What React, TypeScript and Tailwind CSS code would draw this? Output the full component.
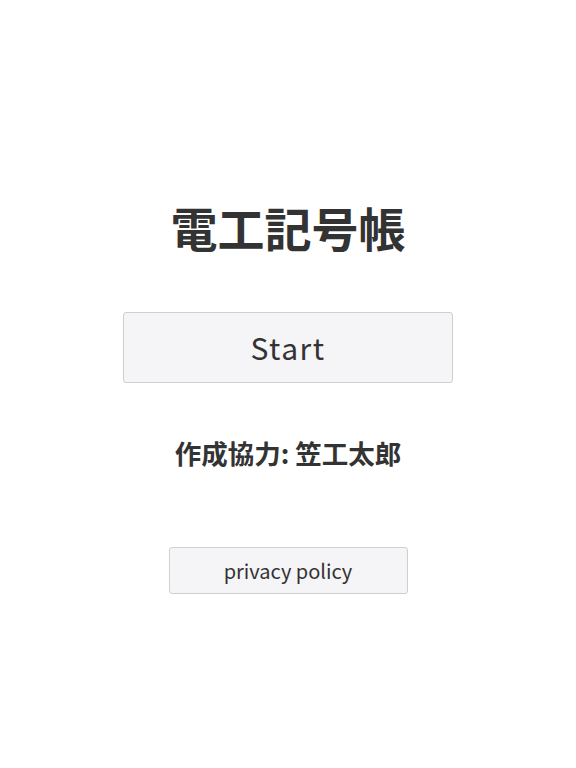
export default function App() {
  return (
    <div
      className="flex min-h-[768px] w-full flex-col items-center bg-white text-[#333]"
      style={{ fontFamily: '"Noto Sans CJK JP", "Noto Sans", sans-serif' }}
    >
      <h1 className="mt-[197px] text-[47px] font-bold leading-[60px]">電工記号帳</h1>

      <button className="mt-[55px] flex h-[71px] w-[330px] items-center justify-center rounded-[3px] border border-[#cfcfd2] bg-[#f5f4f7] text-[30px] tracking-[1.5px] text-[#333]">
        Start
      </button>

      <p className="mt-[50px] text-[26.5px] font-semibold leading-[40px]">作成協力: 笠工太郎</p>

      <button className="mt-[74px] flex h-[47px] w-[239px] items-center justify-center rounded-[3px] border border-[#cfcfd2] bg-[#f5f4f7] text-[20px] text-[#333]">
        privacy policy
      </button>
    </div>
  );
}
